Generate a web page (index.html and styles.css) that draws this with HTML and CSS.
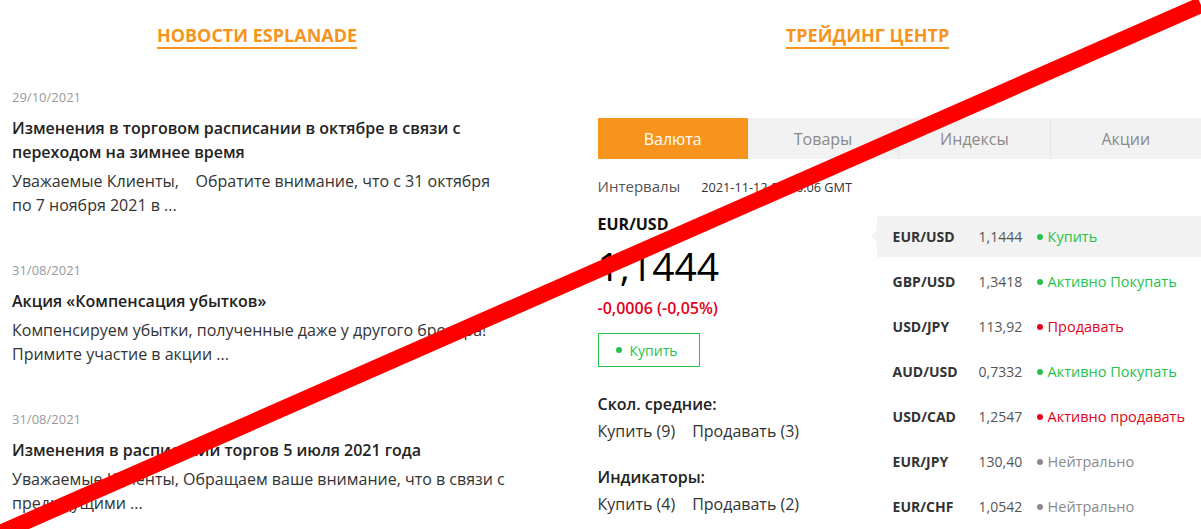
FILE: index.html
```html
<!DOCTYPE html>
<html lang="ru">
  <head>
    <meta charset="UTF-8" />
    <meta name="viewport" content="width=device-width, initial-scale=1.0" />
    <title>Новости и Трейдинг центр</title>
    <link rel="stylesheet" href="styles.css">
  </head>
  <body>
    <div class="page">
      <div class="news">
        <div class="section-title"><span>Новости Esplanade</span></div>

        <div class="news-item">
          <div class="news-date">29/10/2021</div>
          <div class="news-title">Изменения в торговом расписании в октябре в связи с переходом на зимнее время</div>
          <div class="news-text">Уважаемые Клиенты,&nbsp;&nbsp;&nbsp; Обратите внимание, что с 31 октября по 7 ноября 2021 в ...</div>
        </div>

        <div class="news-item">
          <div class="news-date">31/08/2021</div>
          <div class="news-title">Акция «Компенсация убытков»</div>
          <div class="news-text">Компенсируем убытки, полученные даже у другого брокера! Примите участие в акции ...</div>
        </div>

        <div class="news-item">
          <div class="news-date">31/08/2021</div>
          <div class="news-title">Изменения в расписании торгов 5 июля 2021 года</div>
          <div class="news-text">Уважаемые Клиенты, Обращаем ваше внимание, что в связи с предыдущими ...</div>
        </div>
      </div>

      <div class="trading">
        <div class="section-title trading-title"><span>Трейдинг центр</span></div>

        <div class="tabs">
          <div class="tab active">Валюта</div>
          <div class="tab">Товары</div>
          <div class="tab">Индексы</div>
          <div class="tab">Акции</div>
        </div>

        <div class="intervals">
          <span class="intervals-label">Интервалы</span>
          <span class="intervals-time">2021-11-12 09:06:06 GMT</span>
        </div>

        <div class="trade-body">
          <div class="detail">
            <div class="detail-pair">EUR/USD</div>
            <div class="detail-price">1,1444</div>
            <div class="detail-change">-0,0006 (-0,05%)</div>
            <div class="signal-btn"><span class="dot buy"></span>Купить</div>

            <div class="summary-label">Скол. средние:</div>
            <div class="summary-values"><span>Купить (9)</span><span>Продавать (3)</span></div>

            <div class="summary-label">Индикаторы:</div>
            <div class="summary-values"><span>Купить (4)</span><span>Продавать (2)</span></div>
          </div>

          <div class="pairs">
            <div class="pair-row selected">
              <span class="pair-name">EUR/USD</span>
              <span class="pair-price">1,1444</span>
              <span class="pair-signal buy"><span class="dot"></span>Купить</span>
            </div>
            <div class="pair-row">
              <span class="pair-name">GBP/USD</span>
              <span class="pair-price">1,3418</span>
              <span class="pair-signal buy"><span class="dot"></span>Активно Покупать</span>
            </div>
            <div class="pair-row">
              <span class="pair-name">USD/JPY</span>
              <span class="pair-price">113,92</span>
              <span class="pair-signal sell"><span class="dot"></span>Продавать</span>
            </div>
            <div class="pair-row">
              <span class="pair-name">AUD/USD</span>
              <span class="pair-price">0,7332</span>
              <span class="pair-signal buy"><span class="dot"></span>Активно Покупать</span>
            </div>
            <div class="pair-row">
              <span class="pair-name">USD/CAD</span>
              <span class="pair-price">1,2547</span>
              <span class="pair-signal sell"><span class="dot"></span>Активно продавать</span>
            </div>
            <div class="pair-row">
              <span class="pair-name">EUR/JPY</span>
              <span class="pair-price">130,40</span>
              <span class="pair-signal neutral"><span class="dot"></span>Нейтрально</span>
            </div>
            <div class="pair-row">
              <span class="pair-name">EUR/CHF</span>
              <span class="pair-price">1,0542</span>
              <span class="pair-signal neutral"><span class="dot"></span>Нейтрально</span>
            </div>
          </div>
        </div>
      </div>
    </div>

    <svg class="strike" width="1201" height="529" viewBox="0 0 1201 529">
      <line x1="0" y1="533" x2="1201" y2="5" stroke="#ff0000" stroke-width="16" />
    </svg>
  </body>
</html>
```

FILE: styles.css
```css
body {
  font-family: "Open Sans", Arial, sans-serif;
  background: #fff;
  color: #222;
  margin: 0;
  overflow: hidden;
}

.page {
  display: flex;
  align-items: flex-start;
}

.section-title {
  text-align: center;
  padding-top: 24px;
}

.section-title span {
  display: inline-block;
  color: #f7941d;
  font-size: 18px;
  font-weight: 700;
  line-height: 22px;
  text-transform: uppercase;
  border-bottom: 2px solid #f7941d;
  padding-bottom: 1px;
}

/* news column */
.news {
  width: 500px;
  padding-left: 12px;
}

.news .section-title {
  width: 490px;
  margin-bottom: 39px;
}

.news-item {
  margin-bottom: 44px;
}

.news-date {
  font-size: 13px;
  line-height: 18px;
  color: #9a9a9a;
}

.news-title {
  margin-top: 10px;
  font-size: 16px;
  font-weight: 600;
  line-height: 24px;
  color: #222;
}

.news-text {
  margin-top: 5px;
  font-size: 16px;
  line-height: 24px;
  color: #333;
}

/* trading column */
.trading {
  margin-left: 86px;
  width: 604px;
}

.trading-title {
  width: 540px;
  margin-bottom: 69px;
}

.tabs {
  display: flex;
  background: #f2f2f2;
}

.tab {
  flex: 1;
  height: 41px;
  line-height: 42px;
  text-align: center;
  font-size: 16px;
  color: #8a8a8a;
  border-left: 1px solid #e6e6e6;
}

.tab:first-child,
.tab.active + .tab {
  border-left: none;
}

.tab.active {
  background: #f7941d;
  color: #fff;
}

.intervals {
  margin-top: 17px;
  line-height: 20px;
}

.intervals-label {
  font-size: 15px;
  color: #555;
  margin-right: 17px;
}

.intervals-time {
  font-size: 12.7px;
  color: #333;
}

.trade-body {
  display: flex;
  margin-top: 16px;
}

.detail {
  width: 279px;
}

.detail-pair {
  font-size: 16px;
  font-weight: 700;
  line-height: 22px;
  color: #111;
}

.detail-price {
  margin-top: 7px;
  font-size: 39px;
  line-height: 48px;
  color: #000;
}

.detail-change {
  margin-top: 7px;
  font-size: 16px;
  font-weight: 600;
  line-height: 22px;
  color: #e3001b;
}

.signal-btn {
  display: flex;
  align-items: center;
  width: 100px;
  height: 32px;
  margin-top: 14px;
  margin-bottom: 25px;
  border: 1px solid #27c24c;
  color: #27c24c;
  font-size: 14px;
  box-sizing: content-box;
}

.signal-btn .dot {
  margin-left: 17px;
  margin-right: 8px;
}

.dot {
  display: inline-block;
  width: 6px;
  height: 6px;
  border-radius: 50%;
  background: currentColor;
}

.dot.buy {
  background: #27c24c;
}

.summary-label {
  font-size: 16px;
  font-weight: 600;
  line-height: 24px;
  color: #222;
}

.summary-values {
  margin-top: 3px;
  margin-bottom: 22px;
  font-size: 16px;
  line-height: 24px;
  color: #333;
}

.summary-values span {
  margin-right: 17px;
}

.pairs {
  flex: 1;
  margin-top: 3px;
}

.pair-row {
  position: relative;
  display: flex;
  align-items: center;
  height: 41px;
  margin-bottom: 4px;
  padding-left: 16px;
  font-size: 14px;
}

.pair-row.selected {
  background: #f2f2f2;
}

.pair-row.selected::before {
  content: "";
  position: absolute;
  left: -6px;
  top: 14px;
  border-top: 6px solid transparent;
  border-bottom: 6px solid transparent;
  border-right: 6px solid #f2f2f2;
}

.pair-name {
  width: 86px;
  font-weight: 700;
  color: #333;
}

.pair-price {
  width: 58px;
  color: #555;
}

.pair-signal {
  display: flex;
  align-items: center;
  font-size: 14.5px;
}

.pair-signal .dot {
  margin-right: 5px;
}

.pair-signal.buy {
  color: #27c24c;
}

.pair-signal.sell {
  color: #e3001b;
}

.pair-signal.neutral {
  color: #8a8a8a;
}

.strike {
  position: absolute;
  left: 0;
  top: 0;
  pointer-events: none;
}
```
